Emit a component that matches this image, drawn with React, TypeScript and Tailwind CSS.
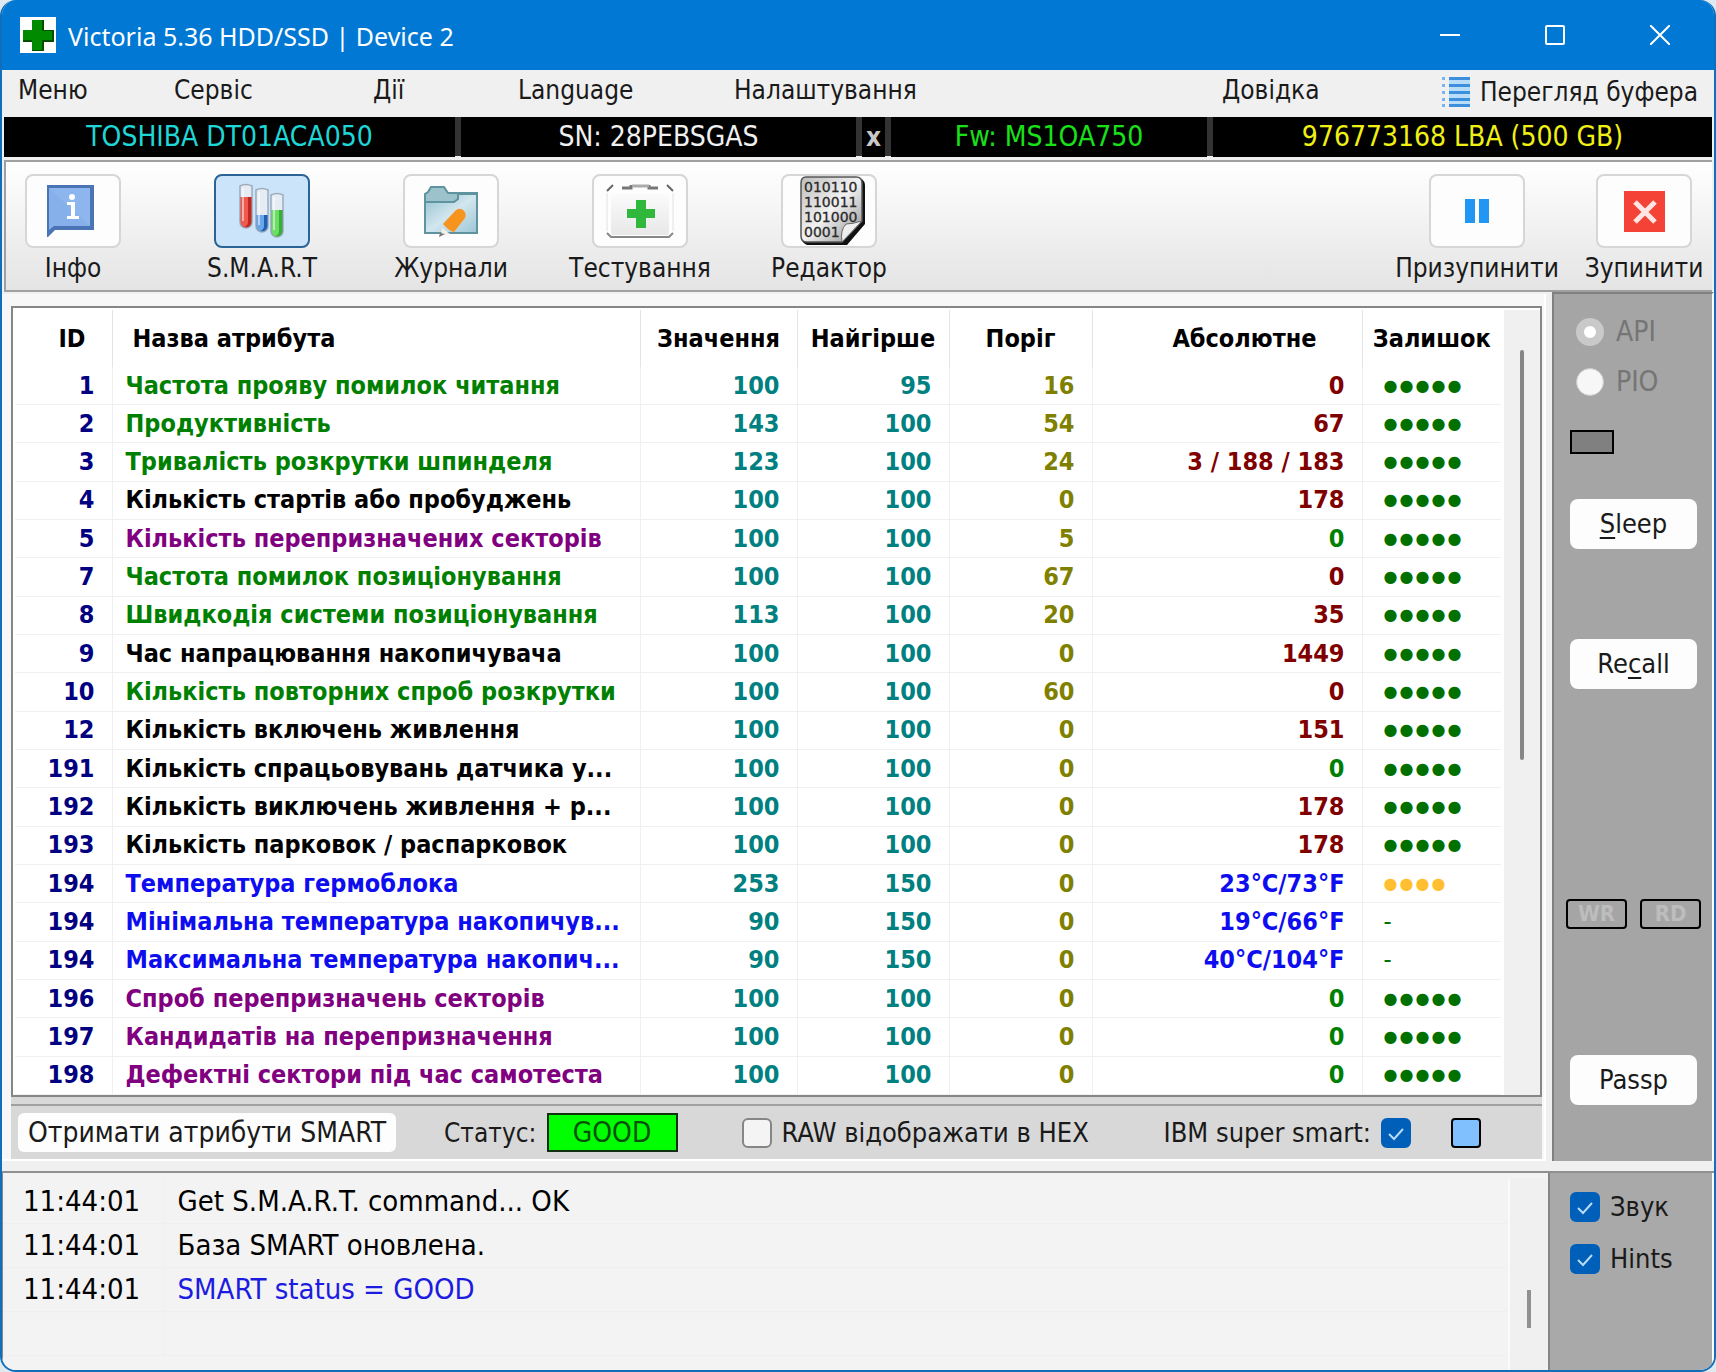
import { useState } from 'react'
import type { ReactNode } from 'react'

type Tone = 'green' | 'black' | 'purple' | 'blue'

interface Attribute {
  id: number
  name: string
  tone: Tone
  value: number
  worst: number
  threshold: number
  raw: string
  rawTone: string
  health: number
}

const TONES: Record<Tone, string> = {
  green: 'text-[#008000]',
  black: 'text-black',
  purple: 'text-[#800080]',
  blue: 'text-[#0d0df0]',
}

const RED = 'text-[#800000]'
const OK = 'text-[#008000]'
const TEMP = 'text-[#0d0df0]'

function attr(
  id: number, name: string, tone: Tone, value: number, worst: number,
  threshold: number, raw: string, rawTone: string, health = 5,
): Attribute {
  return { id, name, tone, value, worst, threshold, raw, rawTone, health }
}

const ATTRIBUTES: Attribute[] = [
  attr(1, 'Частота прояву помилок читання', 'green', 100, 95, 16, '0', RED),
  attr(2, 'Продуктивність', 'green', 143, 100, 54, '67', RED),
  attr(3, 'Тривалість розкрутки шпинделя', 'green', 123, 100, 24, '3 / 188 / 183', RED),
  attr(4, 'Кількість стартів або пробуджень', 'black', 100, 100, 0, '178', RED),
  attr(5, 'Кількість перепризначених секторів', 'purple', 100, 100, 5, '0', OK),
  attr(7, 'Частота помилок позиціонування', 'green', 100, 100, 67, '0', RED),
  attr(8, 'Швидкодія системи позиціонування', 'green', 113, 100, 20, '35', RED),
  attr(9, 'Час напрацювання накопичувача', 'black', 100, 100, 0, '1449', RED),
  attr(10, 'Кількість повторних спроб розкрутки', 'green', 100, 100, 60, '0', RED),
  attr(12, 'Кількість включень живлення', 'black', 100, 100, 0, '151', RED),
  attr(191, 'Кількість спрацьовувань датчика у...', 'black', 100, 100, 0, '0', OK),
  attr(192, 'Кількість виключень живлення + р...', 'black', 100, 100, 0, '178', RED),
  attr(193, 'Кількість парковок / распарковок', 'black', 100, 100, 0, '178', RED),
  attr(194, 'Температура гермоблока', 'blue', 253, 150, 0, '23°C/73°F', TEMP, 4),
  attr(194, 'Мінімальна температура накопичув...', 'blue', 90, 150, 0, '19°C/66°F', TEMP, 0),
  attr(194, 'Максимальна температура накопич...', 'blue', 90, 150, 0, '40°C/104°F', TEMP, 0),
  attr(196, 'Спроб перепризначень секторів', 'purple', 100, 100, 0, '0', OK),
  attr(197, 'Кандидатів на перепризначення', 'purple', 100, 100, 0, '0', OK),
  attr(198, 'Дефектні сектори під час самотеста', 'purple', 100, 100, 0, '0', OK),
]

const LOG = [
  { time: '11:44:01', text: 'Get S.M.A.R.T. command... OK', color: 'text-black' },
  { time: '11:44:01', text: 'База SMART оновлена.', color: 'text-black' },
  { time: '11:44:01', text: 'SMART status = GOOD', color: 'text-[#1c1ce0]' },
]

// ── Icons ──────────────────────────────────────────────────────────────────

function AppIcon() {
  return (
    <svg width="36" height="36" viewBox="0 0 36 36" aria-hidden="true">
      <rect width="36" height="36" fill="#fff" />
      <path d="M12 3h12v10h10v12H24v9H12v-9H3V13h9z" fill="#005000" />
      <path d="M12 3h10v11h10v9H22v10H12V23H3V13h9z" fill="#008a00" />
    </svg>
  )
}

function BufferIcon() {
  return (
    <svg width="28" height="30" viewBox="0 0 28 30" aria-hidden="true">
      <rect x="7" y="0" width="21" height="30" fill="#b9dcf8" />
      {[0, 7, 14, 21, 27].map((y) => (
        <g key={y}>
          <rect x="0" y={y} width="3" height="3" fill="#7ab4e8" />
          <rect x="7" y={y} width="21" height="3" fill="#3b8fdc" />
        </g>
      ))}
    </svg>
  )
}

function InfoIcon() {
  return (
    <svg width="52" height="54" viewBox="0 0 52 54" aria-hidden="true">
      <path d="M0 1h47v45H8l-7 7H0z" fill="#4a74b4" />
      <path d="M2 4h41v38H7l-5 4z" fill="#86b0ea" />
      <path d="M2 4h41v38z" fill="#8eb6ee" />
      <circle cx="25" cy="13" r="3" fill="#fff" />
      <path d="M20 18h8v14h4v3H20v-3h4V21h-4z" fill="#fff" />
    </svg>
  )
}

function TubesIcon() {
  const tubes = [
    { x: 1, y: 1, fill: 13, light: '#ee5a4e', dark: '#c4261c' },
    { x: 17, y: 5, fill: 27, light: '#6aa6ea', dark: '#1f5fb4' },
    { x: 32, y: 10, fill: 17, light: '#6edc66', dark: '#35b035' },
  ]
  return (
    <svg width="48" height="56" viewBox="0 0 48 56" aria-hidden="true">
      {tubes.map((t) => (
        <g key={t.x} transform={`translate(${t.x} ${t.y})`}>
          <path d="M1 2q6-3 12 0v36a6 6 0 0 1-12 0z" fill="#e6ecf4" />
          <path d={`M1 ${t.fill}h12V38a6 6 0 0 1-12 0z`} fill={t.light} />
          <path d={`M9 ${t.fill}h4V38a6 6 0 0 1-8 5q4-1 4-5z`} fill={t.dark} />
          <path d="M4 4v33" stroke="#fff" strokeWidth="2" opacity=".5" />
          <path d="M1 2q6-3 12 0v36a6 6 0 0 1-12 0z" fill="none" stroke="#8e9cac" strokeWidth="1.5" opacity=".8" />
        </g>
      ))}
    </svg>
  )
}

function FolderIcon() {
  return (
    <svg width="56" height="52" viewBox="0 0 56 52" aria-hidden="true">
      <defs>
        <linearGradient id="folder" x1="0" y1="0" x2="1" y2="1">
          <stop offset="0" stopColor="#8fc0cf" />
          <stop offset="0.5" stopColor="#d2e6ee" />
          <stop offset="1" stopColor="#9cc6d6" />
        </linearGradient>
      </defs>
      <path d="M2 48V9l3-2 3-5h13l4 6h29v40z" fill="#9cc3cb" stroke="#5f93a0" strokeWidth="2" />
      <path d="M2 48V17h29l4-3V9h19v39z" fill="url(#folder)" stroke="#5f93a0" strokeWidth="2" />
      <path d="M19 43l8 6-9 2z" fill="#f5efe6" />
      <path d="M20 39l12-13q4-4 8-1t2 8L31 47q-5-1-11-8z" fill="#f7941d" />
      <path d="M17 48l5 1-6 3z" fill="#777" />
    </svg>
  )
}

function KitIcon() {
  return (
    <svg width="68" height="56" viewBox="0 0 68 56" aria-hidden="true">
      <defs>
        <linearGradient id="kit" x1="0" y1="0" x2="0" y2="1">
          <stop offset="0" stopColor="#fafafa" />
          <stop offset="1" stopColor="#e8e8e8" />
        </linearGradient>
      </defs>
      <rect x="5" y="11" width="58" height="41" rx="2" fill="url(#kit)" />
      <path d="M1 8l6-6M67 8l-6-6" stroke="#666" strokeWidth="2" />
      <path d="M16 5h9V2M52 5h-9V2" fill="none" stroke="#777" strokeWidth="3" />
      <path d="M26 3h17" stroke="#aaa" strokeWidth="3" />
      <path d="M1 10v38M67 10v38" stroke="#e2e2e2" strokeWidth="1" />
      <path d="M1 50l4 4h58l4-4" fill="none" stroke="#888" strokeWidth="2" />
      <path d="M30 17h10v9h9v9h-9v10H30V35h-9v-9h9z" fill="#2fb83c" />
    </svg>
  )
}

function BinaryIcon() {
  return (
    <svg width="74" height="70" viewBox="-8 0 74 70" aria-hidden="true">
      <defs>
        <linearGradient id="page" x1="0" y1="0" x2="1" y2="1">
          <stop offset="0" stopColor="#bdbdbd" />
          <stop offset="0.5" stopColor="#f2f2f2" />
          <stop offset="1" stopColor="#8a8a8a" />
        </linearGradient>
      </defs>
      <path d="M5 2h54q6 2 6 7v39L47 69H7q-5-2-6-7z" fill="#111" />
      <path d="M6 1h50q6 0 6 6v38L42 66H7q-6 0-6-6V7q0-6 5-6z" fill="url(#page)" stroke="#555" strokeWidth="1.5" />
      <g fill="#2a2a2a" stroke="#2a2a2a" strokeWidth="0.3" fontFamily="DejaVu Sans" fontSize="14">
        <text x="4" y="16">010110</text>
        <text x="4" y="31">110011</text>
        <text x="4" y="46">101000</text>
        <text x="4" y="61">0001</text>
      </g>
      <path d="M42 66q-2-12 4-18 6 0 16-3z" fill="#eee" stroke="#666" strokeWidth="1" />
    </svg>
  )
}

function PauseIcon() {
  return (
    <svg width="24" height="24" viewBox="0 0 24 24" aria-hidden="true">
      <path d="M0 0h10v24H0zM14 0h10v24H14z" fill="#2196f3" />
    </svg>
  )
}

function StopIcon() {
  return (
    <svg width="41" height="41" viewBox="0 0 41 41" aria-hidden="true">
      <rect width="41" height="41" fill="#f44336" />
      <path d="M11 11l20 20M31 11L11 31" stroke="#ffe6e4" strokeWidth="5" />
    </svg>
  )
}

// ── Controls ───────────────────────────────────────────────────────────────

function ToolButton({ label, active, children }: { label: string; active?: boolean; children: ReactNode }) {
  return (
    <button type="button" className="flex w-24 flex-col items-center gap-1 whitespace-nowrap">
      <span
        className={`flex h-[74px] w-24 items-center justify-center rounded-lg border-2 ${
          active ? 'border-[#2a6496] bg-[#cce4f9]' : 'border-[#d6d6d6] bg-[#fdfdfd]'
        }`}
      >
        {children}
      </span>
      <span className="leading-8">{label}</span>
    </button>
  )
}

function Check({ label, labelFirst, initial = false }: { label: string; labelFirst?: boolean; initial?: boolean }) {
  const [checked, setChecked] = useState(initial)
  return (
    <label className={`flex items-center gap-2.5 whitespace-nowrap ${labelFirst ? 'flex-row-reverse' : ''}`}>
      <span className="relative block size-[30px]">
        <input
          type="checkbox"
          checked={checked}
          onChange={(e) => setChecked(e.target.checked)}
          className="block size-full appearance-none rounded-md border-2 border-[#868686] bg-[#f4f4f4] checked:border-[#005fb8] checked:bg-[#005fb8]"
        />
        {checked && (
          <svg viewBox="0 0 30 30" className="pointer-events-none absolute inset-0" aria-hidden="true">
            <path d="M8 16l5 5 9-10" fill="none" stroke="#b8dcf8" strokeWidth="2" />
          </svg>
        )}
      </span>
      <span>{label}</span>
    </label>
  )
}

function SideButton({ children }: { children: ReactNode }) {
  return (
    <button type="button" className="h-[50px] rounded-lg bg-[#fdfdfd] text-center">
      {children}
    </button>
  )
}

function Lamp({ children }: { children: ReactNode }) {
  return (
    <span className="flex h-[30px] w-[61px] items-center justify-center rounded border-2 border-black text-[22px] font-bold text-[#bdbdbd]">
      {children}
    </span>
  )
}

// ── Sections ───────────────────────────────────────────────────────────────

function TitleBar() {
  return (
    <header className="flex h-[70px] items-center bg-[#0078d4] pl-[18px] text-white">
      <AppIcon />
      <h1 className="ml-3 pt-0.5 font-['Noto_Sans',sans-serif] text-[25px]">Victoria 5.36 HDD/SSD | Device 2</h1>
      <div className="ml-auto flex pr-0.5">
        <button type="button" aria-label="Згорнути" className="flex w-[105px] justify-center">
          <svg width="20" height="20" viewBox="0 0 20 20"><path d="M0 10h20" stroke="#fff" strokeWidth="2" /></svg>
        </button>
        <button type="button" aria-label="Розгорнути" className="flex w-[105px] justify-center">
          <svg width="20" height="20" viewBox="0 0 20 20"><rect x="1" y="1" width="18" height="18" rx="1" fill="none" stroke="#fff" strokeWidth="2" /></svg>
        </button>
        <button type="button" aria-label="Закрити" className="flex w-[105px] justify-center">
          <svg width="20" height="20" viewBox="0 0 20 20"><path d="M0 0l20 20M20 0L0 20" stroke="#fff" strokeWidth="2" /></svg>
        </button>
      </div>
    </header>
  )
}

function MenuBar() {
  return (
    <nav className="grid h-[47px] grid-cols-[156px_199px_145px_216px_1fr_220px_auto] items-start pt-0.5 pr-4 pl-4 text-[26px] leading-9 text-[#1a1a1a]">
      <button type="button" className="text-left">Меню</button>
      <button type="button" className="text-left">Сервіс</button>
      <button type="button" className="text-left">Дії</button>
      <button type="button" className="text-left">Language</button>
      <button type="button" className="text-left">Налаштування</button>
      <button type="button" className="text-left">Довідка</button>
      <button type="button" className="flex items-center gap-2.5 pt-0.5">
        <BufferIcon />
        Перегляд буфера
      </button>
    </nav>
  )
}

function DeviceBar() {
  return (
    <div className="mx-0.5 grid h-[39px] grid-cols-[451fr_395fr_23px_316fr_499fr] gap-1.5 bg-[#333] text-center leading-10 whitespace-nowrap">
      <span className="bg-black text-[#1fd6d6]">TOSHIBA DT01ACA050</span>
      <span className="bg-black text-[#f0f0f0]">SN: 28PEBSGAS</span>
      <button type="button" className="bg-black text-[26px] leading-10 font-bold text-[#c8c8c8]">x</button>
      <span className="bg-black text-[#19e019]">Fw: MS1OA750</span>
      <span className="bg-black text-[#f0f014]">976773168 LBA (500 GB)</span>
    </div>
  )
}

function Toolbar() {
  return (
    <div className="mx-0.5 mt-1 flex h-[132px] items-start justify-between border-t-2 border-b-2 border-l-2 border-[#a0a0a0] bg-linear-to-b from-white to-[#e4e4e4] pt-3 pr-5 pl-[19px] text-[26px] text-[#1a1a1a]">
      <div className="flex gap-[93px]">
        <ToolButton label="Інфо"><InfoIcon /></ToolButton>
        <ToolButton label="S.M.A.R.T" active><TubesIcon /></ToolButton>
        <ToolButton label="Журнали"><FolderIcon /></ToolButton>
        <ToolButton label="Тестування"><KitIcon /></ToolButton>
        <ToolButton label="Редактор"><BinaryIcon /></ToolButton>
      </div>
      <div className="flex gap-[71px]">
        <ToolButton label="Призупинити"><PauseIcon /></ToolButton>
        <ToolButton label="Зупинити"><StopIcon /></ToolButton>
      </div>
    </div>
  )
}

function Health({ level }: { level: number }) {
  if (level === 0) return <span className="font-normal text-[#007000]">-</span>
  return (
    <span className={`flex gap-0.5 font-['DejaVu_Sans',sans-serif] text-base leading-6 ${level < 5 ? 'text-[#ffbf30]' : 'text-[#007000]'}`}>
      {Array.from({ length: level }, (_, i) => <span key={i}>●</span>)}
    </span>
  )
}

function AttributeTable() {
  return (
    <div className="flex min-h-0 flex-1 border-2 border-[#868686] bg-white pt-0.5 pl-0.5">
      <table className="w-full flex-1 table-fixed border-collapse text-[25px] leading-6 font-bold whitespace-nowrap">
        <colgroup>
          <col className="w-[97px]" />
          <col />
          <col className="w-[157px]" />
          <col className="w-[152px]" />
          <col className="w-[143px]" />
          <col className="w-[270px]" />
          <col className="w-[139px]" />
        </colgroup>
        <thead className="text-black">
          <tr className="h-[57px]">
            <th className="border-r border-[#e4e4e4] pr-[26px] text-right">ID</th>
            <th className="border-r border-[#e4e4e4] pl-5 text-left">Назва атрибута</th>
            <th className="border-r border-[#e4e4e4]">Значення</th>
            <th className="border-r border-[#e4e4e4]">Найгірше</th>
            <th className="border-r border-[#e4e4e4]">Поріг</th>
            <th className="border-r border-[#e4e4e4] pr-[45px] text-right">Абсолютне</th>
            <th>Залишок</th>
          </tr>
        </thead>
        <tbody>
          {ATTRIBUTES.map((a) => (
            <tr key={a.name} className="border-b border-[#f0f0f0]">
              <td className="border-r border-[#f0f0f0] pr-[17px] text-right text-[#000080]">{a.id}</td>
              <td className={`overflow-hidden border-r border-[#f0f0f0] pl-[13px] ${TONES[a.tone]}`}>{a.name}</td>
              <td className="border-r border-[#f0f0f0] pr-[17px] text-right text-[#008080]">{a.value}</td>
              <td className="border-r border-[#f0f0f0] pr-[17px] text-right text-[#008080]">{a.worst}</td>
              <td className="border-r border-[#f0f0f0] pr-[17px] text-right text-[#808000]">{a.threshold}</td>
              <td className={`border-r border-[#f0f0f0] pr-[17px] text-right ${a.rawTone}`}>{a.raw}</td>
              <td className="pl-[21px]"><Health level={a.health} /></td>
            </tr>
          ))}
        </tbody>
      </table>
      <div className="ml-[3px] flex w-9 justify-center bg-[#f0f0f0] pt-10">
        <div className="h-[410px] w-1 rounded-sm bg-[#868686]" />
      </div>
    </div>
  )
}

function StatusStrip() {
  return (
    <div className="flex h-[62px] shrink-0 flex-col bg-[#d8d8d8] pt-[7px]">
      <div className="flex flex-1 items-center border-t-2 border-[#a0a0a0] pl-[7px] text-[26px] whitespace-nowrap text-[#1a1a1a]">
        <button type="button" className="h-[39px] w-[378px] rounded-md bg-[#fdfdfd] text-center text-[28px]">Отримати атрибути SMART</button>
        <span className="ml-12">Статус:</span>
        <span className="ml-2.5 h-[39px] w-[131px] border-2 border-[#103010] bg-[#00ff00] text-center text-[28px] leading-[35px] text-[#0a500a]">GOOD</span>
        <div className="ml-16 text-[27px]"><Check label="RAW відображати в HEX" /></div>
        <div className="ml-auto flex items-center gap-10 pr-[61px] text-[27px]">
          <Check label="IBM super smart:" labelFirst initial />
          <span className="block size-[30px] rounded border-2 border-black bg-[#80c0ff]" />
        </div>
      </div>
    </div>
  )
}

function SidePanel() {
  return (
    <aside className="flex w-[162px] shrink-0 flex-col border-t-2 border-r-2 border-l-2 border-t-[#808080] border-r-white border-l-[#808080] bg-[#a5a5a5] pt-5 pr-[15px] pl-4 text-[27px] text-[#1a1a1a]">
      <fieldset disabled className="flex flex-col gap-3.5 pl-1.5 text-[28px] text-[#757575]">
        <label className="flex items-center gap-3 leading-9">
          <input type="radio" name="mode" defaultChecked className="size-7 appearance-none rounded-full border-8 border-[#c9c9c9] bg-white" />
          API
        </label>
        <label className="flex items-center gap-3 leading-9">
          <input type="radio" name="mode" className="size-7 appearance-none rounded-full border border-[#c9c9c9] bg-[#f7f7f7]" />
          PIO
        </label>
      </fieldset>
      <span className="mt-[30px] block h-6 w-11 shrink-0 border-2 border-black bg-[#808080]" />
      <div className="mt-[45px] flex flex-col gap-[90px]">
        <SideButton><u className="underline-offset-4">S</u>leep</SideButton>
        <SideButton>Re<u className="underline-offset-4">c</u>all</SideButton>
      </div>
      <div className="mt-[210px] -mr-1 -ml-1 flex justify-between">
        <Lamp>WR</Lamp>
        <Lamp>RD</Lamp>
      </div>
      <div className="mt-auto mb-14 flex flex-col">
        <SideButton>Passp</SideButton>
      </div>
    </aside>
  )
}

function LogPanel() {
  return (
    <section className="flex h-[199px] shrink-0 border-t-2 border-[#909090]">
      <div className="flex flex-1 border-r-2 border-l border-[#868686] bg-[#f3f3f3] pt-1.5">
        <table className="flex-1 table-fixed border-collapse self-start text-left text-[29px]">
          <colgroup>
            <col className="w-[160px]" />
            <col />
          </colgroup>
          <tbody>
            {LOG.map((l) => (
              <tr key={l.text} className="h-11 border-b border-[#efefef]">
                <td className="border-r border-[#efefef] pl-5">{l.time}</td>
                <td className={`pl-3.5 ${l.color}`}>{l.text}</td>
              </tr>
            ))}
            <tr className="h-11 border-b border-[#efefef]">
              <td className="border-r border-[#efefef]" />
              <td />
            </tr>
          </tbody>
        </table>
        <div className="flex w-10 justify-center border-l-2 border-[#fafafa] bg-[#f0f0f0] pt-[111px]">
          <div className="h-[38px] w-1 bg-[#909090]" />
        </div>
      </div>
      <div className="flex w-[164px] flex-col gap-[22px] border-r-2 border-r-white bg-[#a9a9a9] pt-[19px] pl-5 text-[27px] leading-[30px] text-[#1a1a1a]">
        <Check label="Звук" initial />
        <Check label="Hints" initial />
      </div>
    </section>
  )
}

export default function App() {
  return (
    <div className="min-h-screen bg-[#dfe9f0]">
      <div className="flex min-h-screen flex-col overflow-hidden rounded-2xl border-x-2 border-b-2 border-[#0f6fbd] bg-[#f0f0f0] font-['DejaVu_Sans_Condensed','Noto_Sans',sans-serif] text-[28px] leading-9">
        <TitleBar />
        <MenuBar />
        <DeviceBar />
        <Toolbar />
        <main className="flex flex-1 pb-2.5">
          <div className="mt-0.5 mr-1.5 flex flex-1 flex-col border-r-2 border-b-2 border-white bg-[#f7f7f7] pt-3 pr-0.5 pl-[9px]">
            <AttributeTable />
            <StatusStrip />
          </div>
          <SidePanel />
        </main>
        <LogPanel />
      </div>
    </div>
  )
}
